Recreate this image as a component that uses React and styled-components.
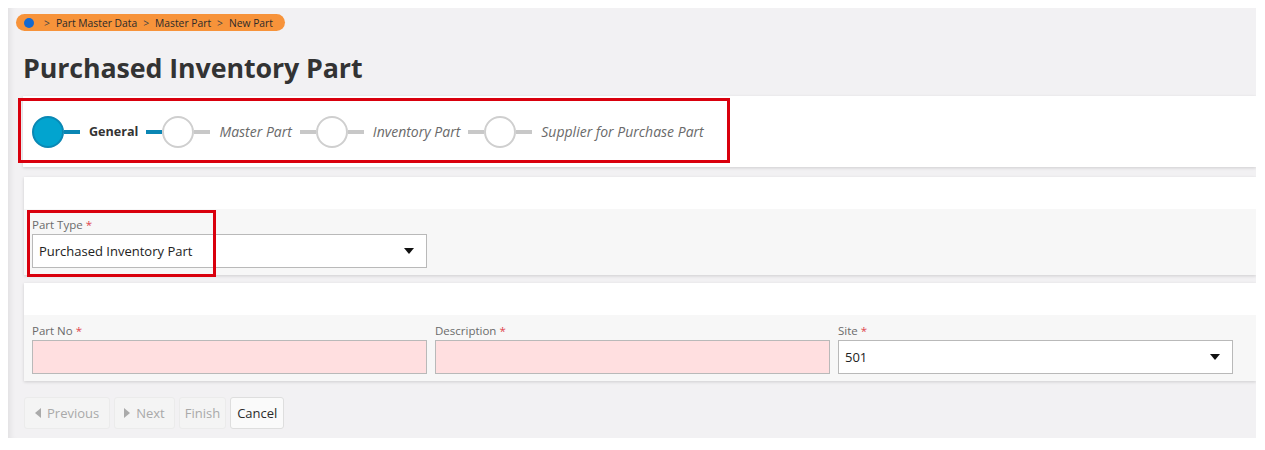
import styled, { createGlobalStyle } from "styled-components"

const GlobalStyle = createGlobalStyle`
  body {
    margin: 0;
    background: #fff;
    font-family: "Open Sans", "Noto Sans", sans-serif;
    color: #333;
  }
`

const Frame = styled.div`
  margin: 8px;
  width: 1248px;
  height: 430px;
  box-sizing: border-box;
  padding: 6px 0 0 8px;
  background: #f2f1f3;
  box-shadow: inset 7px 0 6px -5px rgba(0, 0, 0, 0.08);
  overflow: hidden;
`

const Crumbs = styled.div`
  display: flex;
  align-items: center;
  height: 17px;
  width: 269px;
  box-sizing: border-box;
  padding: 0 0 0 8px;
  border-radius: 9px;
  background: #f7933a;
  font-size: 10.3px;
  color: #2a2a2a;
  gap: 6px;
`

const Dot = styled.span`
  width: 10px;
  height: 10px;
  border-radius: 50%;
  background: #1569d0;
  margin-right: 4px;
`

const Sep = styled.span`
  color: #444;
`

const Title = styled.h1`
  margin: 20px 0 0 7px;
  font-size: 26.8px;
  font-weight: 700;
  line-height: 34px;
  color: #333;
  letter-spacing: -0.1px;
`

const Panel = styled.div`
  position: relative;
  margin: ${(p) => p.$top}px 0 0 ${(p) => p.$left}px;
  background: #fff;
  box-shadow: 0 1px 3px rgba(0, 0, 0, 0.15);
`

const Annotation = styled.div`
  position: absolute;
  left: ${(p) => p.$x}px;
  top: ${(p) => p.$y}px;
  width: ${(p) => p.$w}px;
  height: ${(p) => p.$h}px;
  border: 3px solid #d9000d;
  box-sizing: border-box;
  pointer-events: none;
`

const Stepper = styled.div`
  display: flex;
  align-items: center;
  height: 71px;
  padding-left: 9px;
`

const Step = styled.div`
  display: flex;
  align-items: center;
`

const Line = styled.span`
  width: 16px;
  height: 4px;
  background: ${(p) => (p.$active ? "#0a86b4" : "#c8c8c8")};
`

const Circle = styled.span`
  width: 32px;
  height: 32px;
  box-sizing: border-box;
  border-radius: 50%;
  border: 2px solid ${(p) => (p.$active ? "#0a88b4" : "#cfcfcf")};
  background: ${(p) => (p.$active ? "#02a4cf" : "#fff")};
`

const StepLabel = styled.span`
  margin: 0 8px 0 9px;
  font-size: ${(p) => (p.$active ? 12.6 : 14)}px;
  font-weight: ${(p) => (p.$active ? 700 : 400)};
  font-style: ${(p) => (p.$active ? "normal" : "italic")};
  color: ${(p) => (p.$active ? "#333" : "#6a6a6a")};
`

const Blank = styled.div`
  height: 32px;
`

const Section = styled.div`
  background: #f7f7f7;
  padding: 6px 8px 7px;
  display: grid;
  grid-template-columns: repeat(${(p) => p.$cols}, 395px);
  column-gap: 8px;
`

const Field = styled.div`
  display: flex;
  flex-direction: column;
`

const Label = styled.label`
  font-size: 11.5px;
  color: #6b6b6b;
  height: 19px;
  line-height: 19px;
`

const Req = styled.span`
  color: #e0464f;
`

const Input = styled.div`
  display: flex;
  align-items: center;
  justify-content: space-between;
  height: 34px;
  box-sizing: border-box;
  padding: 0 10px 0 6px;
  border: 1px solid #b9b9b9;
  background: ${(p) => (p.$required ? "#ffdfe0" : "#fff")};
  font-size: 13px;
  color: #222;
`

const Caret = styled.span`
  width: 0;
  height: 0;
  border-left: 5px solid transparent;
  border-right: 5px solid transparent;
  border-top: 6px solid #111;
  margin-right: 2px;
`

const Buttons = styled.div`
  display: flex;
  gap: 4px;
  margin: 16px 0 0 8px;
`

const Button = styled.button`
  height: 32px;
  padding: 0 ${(p) => p.$pad || 6}px;
  border: 1px solid ${(p) => (p.disabled ? "#ebebeb" : "#dedede")};
  border-radius: 3px;
  background: ${(p) => (p.disabled ? "#f4f4f4" : "#fafafa")};
  color: ${(p) => (p.disabled ? "#a9a9a9" : "#2b2b2b")};
  font-family: inherit;
  font-size: 13px;
  display: flex;
  align-items: center;
  gap: 6px;
`

const Tri = styled.span`
  width: 0;
  height: 0;
  border-top: 5px solid transparent;
  border-bottom: 5px solid transparent;
  ${(p) =>
    p.$dir === "left"
      ? "border-right: 6px solid #aaa;"
      : "border-left: 6px solid #aaa;"}
`

const steps = ["General", "Master Part", "Inventory Part", "Supplier for Purchase Part"]

const Dropdown = ({ value }) => (
  <Input>
    {value}
    <Caret />
  </Input>
)

const App = () => {
  return (
    <>
      <GlobalStyle />
      <Frame>
        <Crumbs>
          <Dot />
          <Sep>&gt;</Sep>Part Master Data<Sep>&gt;</Sep>Master Part<Sep>&gt;</Sep>New Part
        </Crumbs>
        <Title>Purchased Inventory Part</Title>

        <Panel $top={11} $left={7}>
          <Stepper>
            {steps.map((s, i) => (
              <Step key={s}>
                {i > 0 && <Line $active={i === 1} />}
                <Circle $active={i === 0} />
                <Line $active={i === 0} />
                <StepLabel $active={i === 0}>{s}</StepLabel>
              </Step>
            ))}
          </Stepper>
          <Annotation $x={-5} $y={2} $w={712} $h={65} />
        </Panel>

        <Panel $top={10} $left={8}>
          <Blank />
          <Section $cols={1}>
            <Field>
              <Label>
                Part Type <Req>*</Req>
              </Label>
              <Dropdown value="Purchased Inventory Part" />
            </Field>
          </Section>
          <Annotation $x={3} $y={33} $w={189} $h={67} />
        </Panel>

        <Panel $top={8} $left={8}>
          <Blank />
          <Section $cols={3}>
            <Field>
              <Label>
                Part No <Req>*</Req>
              </Label>
              <Input $required />
            </Field>
            <Field>
              <Label>
                Description <Req>*</Req>
              </Label>
              <Input $required />
            </Field>
            <Field>
              <Label>
                Site <Req>*</Req>
              </Label>
              <Dropdown value="501" />
            </Field>
          </Section>
        </Panel>

        <Buttons>
          <Button disabled $pad={10}>
            <Tri $dir="left" />
            Previous
          </Button>
          <Button disabled $pad={9}>
            <Tri $dir="right" />
            Next
          </Button>
          <Button disabled $pad={5}>Finish</Button>
          <Button $pad={6}>Cancel</Button>
        </Buttons>
      </Frame>
    </>
  )
}

export default App
